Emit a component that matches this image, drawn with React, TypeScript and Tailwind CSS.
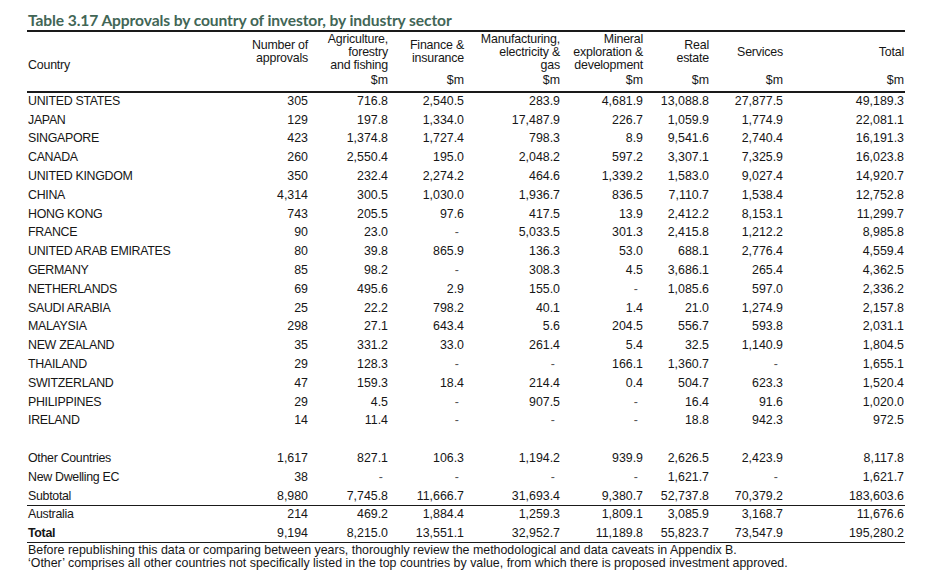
import React from "react";

type Row = { name: string; vals: string[]; bold?: boolean };

const rows: Row[] = [
  { name: "UNITED STATES", vals: ["305", "716.8", "2,540.5", "283.9", "4,681.9", "13,088.8", "27,877.5", "49,189.3"] },
  { name: "JAPAN", vals: ["129", "197.8", "1,334.0", "17,487.9", "226.7", "1,059.9", "1,774.9", "22,081.1"] },
  { name: "SINGAPORE", vals: ["423", "1,374.8", "1,727.4", "798.3", "8.9", "9,541.6", "2,740.4", "16,191.3"] },
  { name: "CANADA", vals: ["260", "2,550.4", "195.0", "2,048.2", "597.2", "3,307.1", "7,325.9", "16,023.8"] },
  { name: "UNITED KINGDOM", vals: ["350", "232.4", "2,274.2", "464.6", "1,339.2", "1,583.0", "9,027.4", "14,920.7"] },
  { name: "CHINA", vals: ["4,314", "300.5", "1,030.0", "1,936.7", "836.5", "7,110.7", "1,538.4", "12,752.8"] },
  { name: "HONG KONG", vals: ["743", "205.5", "97.6", "417.5", "13.9", "2,412.2", "8,153.1", "11,299.7"] },
  { name: "FRANCE", vals: ["90", "23.0", "-", "5,033.5", "301.3", "2,415.8", "1,212.2", "8,985.8"] },
  { name: "UNITED ARAB EMIRATES", vals: ["80", "39.8", "865.9", "136.3", "53.0", "688.1", "2,776.4", "4,559.4"] },
  { name: "GERMANY", vals: ["85", "98.2", "-", "308.3", "4.5", "3,686.1", "265.4", "4,362.5"] },
  { name: "NETHERLANDS", vals: ["69", "495.6", "2.9", "155.0", "-", "1,085.6", "597.0", "2,336.2"] },
  { name: "SAUDI ARABIA", vals: ["25", "22.2", "798.2", "40.1", "1.4", "21.0", "1,274.9", "2,157.8"] },
  { name: "MALAYSIA", vals: ["298", "27.1", "643.4", "5.6", "204.5", "556.7", "593.8", "2,031.1"] },
  { name: "NEW ZEALAND", vals: ["35", "331.2", "33.0", "261.4", "5.4", "32.5", "1,140.9", "1,804.5"] },
  { name: "THAILAND", vals: ["29", "128.3", "-", "-", "166.1", "1,360.7", "-", "1,655.1"] },
  { name: "SWITZERLAND", vals: ["47", "159.3", "18.4", "214.4", "0.4", "504.7", "623.3", "1,520.4"] },
  { name: "PHILIPPINES", vals: ["29", "4.5", "-", "907.5", "-", "16.4", "91.6", "1,020.0"] },
  { name: "IRELAND", vals: ["14", "11.4", "-", "-", "-", "18.8", "942.3", "972.5"] },
];

const rows2: Row[] = [
  { name: "Other Countries", vals: ["1,617", "827.1", "106.3", "1,194.2", "939.9", "2,626.5", "2,423.9", "8,117.8"] },
  { name: "New Dwelling EC", vals: ["38", "-", "-", "-", "-", "1,621.7", "-", "1,621.7"] },
  { name: "Subtotal", vals: ["8,980", "7,745.8", "11,666.7", "31,693.4", "9,380.7", "52,737.8", "70,379.2", "183,603.6"] },
];

const rows3: Row[] = [
  { name: "Australia", vals: ["214", "469.2", "1,884.4", "1,259.3", "1,809.1", "3,085.9", "3,168.7", "11,676.6"] },
  { name: "Total", vals: ["9,194", "8,215.0", "13,551.1", "32,952.7", "11,189.8", "55,823.7", "73,547.9", "195,280.2"], bold: true },
];

const GRID = "grid grid-cols-[213px_68px_80px_76px_96px_83px_66px_74px_121px]";

function DataRow({ r }: { r: Row }) {
  return (
    <div className={`${GRID} h-[18.8px] items-center`}>
      <div className={`pl-[1px] whitespace-nowrap tracking-[-0.3px] ${r.bold ? "font-bold" : ""}`}>{r.name}</div>
      {r.vals.map((v, i) => (
        <div key={i} className="text-right whitespace-nowrap">
          {v === "-" ? <span className="mr-[5px] text-[#555]">-</span> : v}
        </div>
      ))}
    </div>
  );
}

export default function App() {
  return (
    <div className="w-[933px] h-[578px] bg-white text-[#161616] overflow-hidden">
      <div
        className="ml-[27px] w-[878px] text-[12.4px] leading-[13px]"
        style={{ fontFamily: '"Liberation Sans", Arial, sans-serif' }}
      >
        <div className="h-[30px] flex items-end pl-[1px] pb-[1px]">
          <span
            className="text-[15.6px] leading-[18px] font-bold text-[#426656] tracking-[-0.1px]"
            style={{ fontFamily: 'Lato, "Open Sans", sans-serif' }}
          >
            Table 3.17 Approvals by country of investor, by industry sector
          </span>
        </div>
        <div className="border-t-[2px] border-[#1a1a1a]" />
        {/* header */}
        <div className={`${GRID} h-[40px] tracking-[-0.2px]`}>
          <div className="self-end pl-[1px]">Country</div>
          <div className="flex flex-col justify-center text-right">
            <span>Number of</span>
            <span>approvals</span>
          </div>
          <div className="flex flex-col justify-center text-right">
            <span>Agriculture,</span>
            <span>forestry</span>
            <span>and fishing</span>
          </div>
          <div className="flex flex-col justify-center text-right">
            <span>Finance &amp;</span>
            <span>insurance</span>
          </div>
          <div className="flex flex-col justify-center text-right">
            <span>Manufacturing,</span>
            <span>electricity &amp;</span>
            <span>gas</span>
          </div>
          <div className="flex flex-col justify-center text-right">
            <span>Mineral</span>
            <span>exploration &amp;</span>
            <span>development</span>
          </div>
          <div className="flex flex-col justify-center text-right">
            <span>Real</span>
            <span>estate</span>
          </div>
          <div className="flex flex-col justify-center text-right">
            <span>Services</span>
          </div>
          <div className="flex flex-col justify-center text-right">
            <span>Total</span>
          </div>
        </div>
        <div className={`${GRID} h-[20px] pt-[2px]`}>
          <div />
          <div />
          {Array.from({ length: 7 }).map((_, i) => (
            <div key={i} className="text-right">$m</div>
          ))}
        </div>
        <div className="border-t-[2px] border-[#1a1a1a] -mt-[1px] mb-[-1px]" />
        {rows.map((r) => (
          <DataRow key={r.name} r={r} />
        ))}
        <div className="h-[18.8px]" />
        {rows2.map((r) => (
          <DataRow key={r.name} r={r} />
        ))}
        <div className="border-t-[1.5px] border-[#1a1a1a] -mt-[1px] mb-[-0.5px]" />
        {rows3.map((r) => (
          <DataRow key={r.name} r={r} />
        ))}
        <div className="border-t-[1.5px] border-[#1a1a1a] -mt-[1px] mb-[-0.5px]" />
        <div className="pl-[1px] pt-[2px] leading-[13px] whitespace-nowrap">
          <div>
            Before republishing this data or comparing between years, thoroughly review the methodological and data caveats in Appendix B.
          </div>
          <div>
            ‘Other’ comprises all other countries not specifically listed in the top countries by value, from which there is proposed investment approved.
          </div>
        </div>
      </div>
    </div>
  );
}
